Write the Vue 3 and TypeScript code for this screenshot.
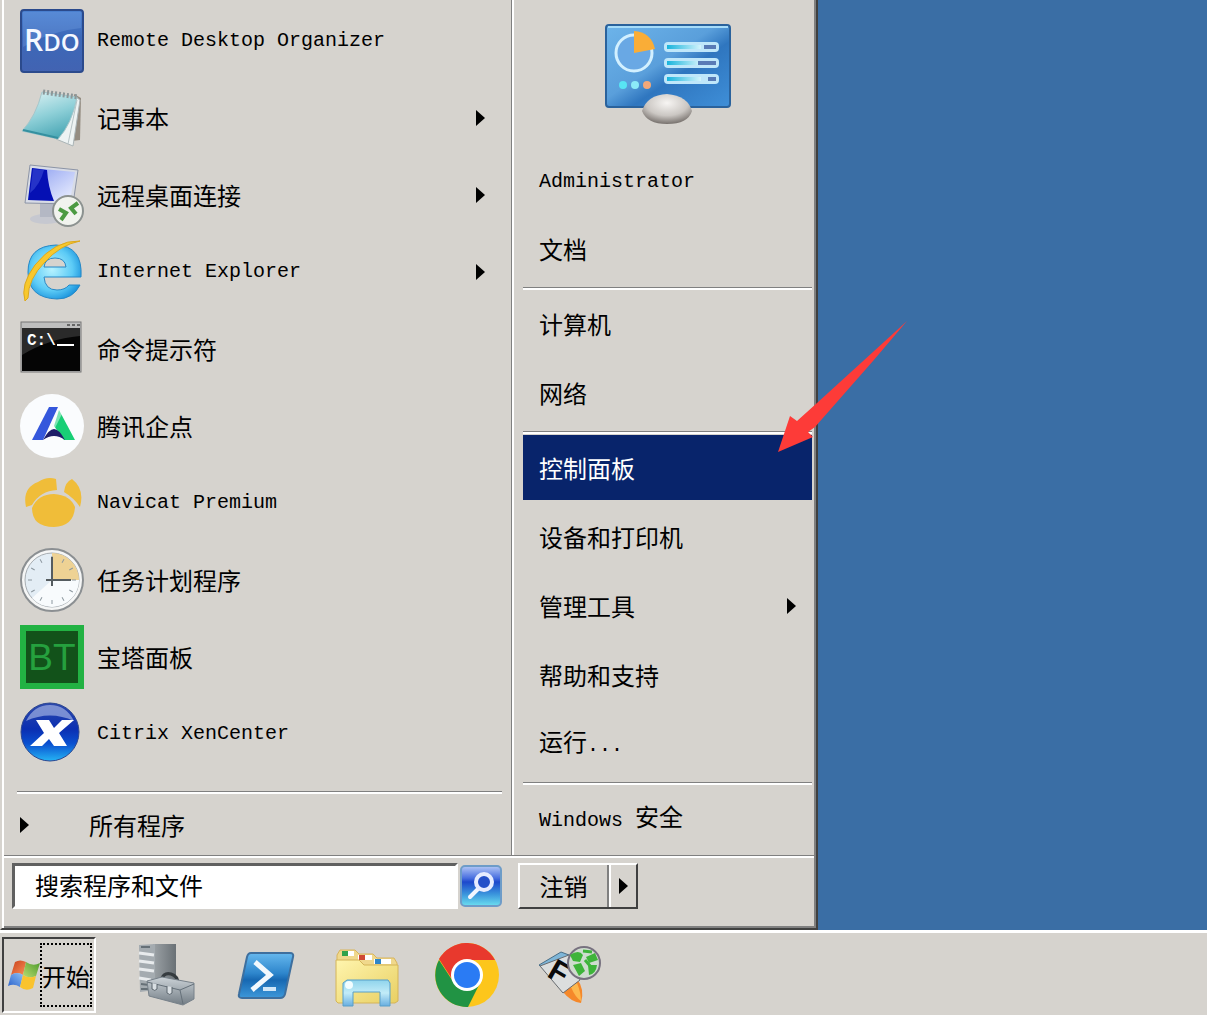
<script setup lang="ts">
import { ref } from 'vue'

interface Program {
  icon: string
  label: string
  latin?: boolean
  submenu?: boolean
}

interface Place {
  label?: string
  latin?: string
  latinAfter?: boolean
  submenu?: boolean
  selected?: boolean
}

const programs: Program[] = [
  { icon: 'rdo', label: 'Remote Desktop Organizer', latin: true },
  { icon: 'notepad', label: '记事本', submenu: true },
  { icon: 'remote', label: '远程桌面连接', submenu: true },
  { icon: 'ie', label: 'Internet Explorer', latin: true, submenu: true },
  { icon: 'cmd', label: '命令提示符' },
  { icon: 'qidian', label: '腾讯企点' },
  { icon: 'navicat', label: 'Navicat Premium', latin: true },
  { icon: 'clock', label: '任务计划程序' },
  { icon: 'bt', label: '宝塔面板' },
  { icon: 'xen', label: 'Citrix XenCenter', latin: true },
]

const placeGroups: Place[][] = [
  [{ latin: 'Administrator' }, { label: '文档' }],
  [{ label: '计算机' }, { label: '网络' }],
  [
    { label: '控制面板', selected: true },
    { label: '设备和打印机' },
    { label: '管理工具', submenu: true },
    { label: '帮助和支持' },
    { label: '运行', latin: '...', latinAfter: true },
  ],
  [{ latin: 'Windows ', label: '安全' }],
]

const ticks = Array.from({ length: 12 }, (_, i) => i * 30)
const query = ref('')
</script>

<template>
  <div class="page">
    <main class="desktop">
      <section class="menu" aria-label="开始菜单">
        <div class="panes">
          <nav class="programs">
            <button v-for="p in programs" :key="p.icon" class="program" type="button">
              <svg class="program-icon" viewBox="0 0 64 64" aria-hidden="true">
                <g v-if="p.icon === 'rdo'">
                  <defs>
                    <linearGradient id="rdoFill" x1="0" y1="0" x2="0" y2="1">
                      <stop offset="0" stop-color="#4a80d0" />
                      <stop offset=".45" stop-color="#3c68b8" />
                      <stop offset="1" stop-color="#4263b2" />
                    </linearGradient>
                  </defs>
                  <rect x="1" y="1" width="62" height="62" rx="3" fill="url(#rdoFill)" stroke="#2b4a8c" stroke-width="2" />
                  <path d="M3 3h58v16Q30 22 3 38Z" fill="#7aa6e8" opacity=".3" />
                  <text x="4" y="42" font-family="'Open Sans', sans-serif" font-weight="600" font-size="30" fill="#f4f8ff">R<tspan font-size="24">DO</tspan></text>
                </g>
                <g v-else-if="p.icon === 'notepad'">
                  <defs>
                    <linearGradient id="padFill" x1=".2" y1="0" x2=".6" y2="1">
                      <stop offset="0" stop-color="#d8f0f2" />
                      <stop offset=".5" stop-color="#8fd0d8" />
                      <stop offset="1" stop-color="#48a6b4" />
                    </linearGradient>
                  </defs>
                  <path d="M54 8 61 12 60 54 52 55Z" fill="#958d82" />
                  <path d="M56 11 60 14 53 60 36 53Z" fill="#eef3f3" stroke="#aab4b6" />
                  <path d="M57 14 48 58" stroke="#b8c4c6" fill="none" />
                  <path d="M22 6 57 11Q52 38 38 53L2 45Q16 30 22 6Z" fill="url(#padFill)" stroke="#a6c6ca" />
                  <path d="M3 44 38 52" stroke="#3590a0" stroke-width="2" />
                  <path d="M23 6 58 11" stroke="#8c9698" stroke-width="5" stroke-dasharray="2 2" />
                </g>
                <g v-else-if="p.icon === 'remote'">
                  <defs>
                    <linearGradient id="scrFill" x1="0" y1="0" x2="1" y2="1">
                      <stop offset="0" stop-color="#8a9cf0" />
                      <stop offset="1" stop-color="#eef2ff" />
                    </linearGradient>
                  </defs>
                  <ellipse cx="26" cy="56" rx="16" ry="5" fill="#c6c8d0" />
                  <path d="M20 40h14v14H20Z" fill="#b4b8c4" />
                  <path d="M10 2 58 7 53 41 5 40Z" fill="#d8dce6" stroke="#8c94a6" />
                  <path d="M12 5 55 9 50 38 8 37Z" fill="url(#scrFill)" />
                  <path d="M12 5 27 7Q28 24 34 38L8 37Z" fill="#0510b4" />
                  <path d="M13 6 24 7Q20 22 10 30Z" fill="#3f50d8" opacity=".55" />
                  <circle cx="48" cy="48" r="15" fill="#f1f3ee" stroke="#8c9290" stroke-width="2" />
                  <path d="M39 46 46 50 41 57M58 40 51 45 56 51" fill="none" stroke="#4c9a42" stroke-width="4" />
                </g>
                <g v-else-if="p.icon === 'ie'">
                  <defs>
                    <radialGradient id="ieFill" cx=".45" cy=".45" r=".6">
                      <stop offset="0" stop-color="#b6f2ff" />
                      <stop offset=".65" stop-color="#5ccbf6" />
                      <stop offset="1" stop-color="#1b93dc" />
                    </radialGradient>
                  </defs>
                  <path d="M61 37H24q1 13 13 13 8 0 12-5h11q-7 14-23 14Q8 58 8 32T36 5q27 1 25 32ZM24 27h22q-1-9-11-9T24 27Z" fill="url(#ieFill)" stroke="#2688c6" />
                  <path d="M5 61Q0 45 15 25 35 0 60 1 40 5 25 22 8 39 8 58Z" fill="#f8c82c" stroke="#dda81c" />
                </g>
                <g v-else-if="p.icon === 'cmd'">
                  <rect x="1" y="5" width="60" height="50" fill="#bebebe" stroke="#777" />
                  <rect x="2" y="11" width="58" height="43" fill="#050505" />
                  <path d="M2 11h58v8Q28 22 2 38Z" fill="#484848" opacity=".55" />
                  <path d="M47 8h3M52 8h3M57 8h3" stroke="#666" stroke-width="2" />
                  <text x="7" y="28" font-family="'Liberation Mono', monospace" font-weight="700" font-size="16" fill="#fff">C:\</text>
                  <path d="M37 28h17" stroke="#fff" stroke-width="2" />
                </g>
                <g v-else-if="p.icon === 'qidian'">
                  <circle cx="32" cy="32" r="32" fill="#fafcfe" />
                  <path d="M29 13h9L23 46H12Z" fill="#3457dc" />
                  <path d="M39 16 55 46H44L34 32Z" fill="#18cf76" />
                  <path d="M39 14 42 20 35 34 30 31Z" fill="#fafcfe" opacity=".45" />
                  <path d="M23 46Q29 35 34 35T45 46Q34 38 23 46Z" fill="#1d1d68" />
                </g>
                <g v-else-if="p.icon === 'navicat'">
                  <path d="M6 36Q2 17 18 11 27 5 36 8L37 19Q20 20 12 34ZM52 8Q65 18 60 36 54 27 44 21 45 11 52 8Z" fill="#f0bd39" />
                  <path d="M12 37Q18 23 34 23 50 24 55 36 54 55 34 56 12 56 12 37Z" fill="#f0bd39" />
                </g>
                <g v-else-if="p.icon === 'clock'">
                  <circle cx="32" cy="32" r="31" fill="#f5f6f6" stroke="#8b8f92" stroke-width="2" />
                  <circle cx="32" cy="32" r="27" fill="#e3edf5" stroke="#a7adb2" />
                  <path d="M32 32V5A27 27 0 0 1 59 32Z" fill="#eed294" />
                  <path d="M32 32H59A27 27 0 0 1 12 50Z" fill="#f8fbfd" />
                  <path v-for="t in ticks" :key="t" d="M32 8v4" stroke="#8c979f" :transform="`rotate(${t} 32 32)`" />
                  <path d="M32 9v29M26 32h25" stroke="#555c60" stroke-width="2" />
                </g>
                <g v-else-if="p.icon === 'bt'">
                  <rect width="64" height="64" fill="#22b243" />
                  <rect x="6" y="6" width="52" height="52" fill="#12521a" />
                  <text x="32" y="45" text-anchor="middle" font-family="'Liberation Sans', sans-serif" font-size="37" fill="#25a03e">BT</text>
                </g>
                <g v-else>
                  <defs>
                    <linearGradient id="xenFill" x1="0" y1="0" x2="0" y2="1">
                      <stop offset="0" stop-color="#2d49ac" />
                      <stop offset=".45" stop-color="#0b2fb2" />
                      <stop offset=".7" stop-color="#0a50d0" />
                      <stop offset="1" stop-color="#25b4f4" />
                    </linearGradient>
                  </defs>
                  <circle cx="30" cy="30" r="29" fill="url(#xenFill)" stroke="#2c4690" />
                  <path d="M6 19Q14 3 30 3T54 19Q30 8 6 19Z" fill="#a9b8e6" opacity=".65" />
                  <path d="M16 18H29L34 26 42 18H54L39 31 47 44H34L29 37 22 44H10L24 31Z" fill="#fff" />
                </g>
              </svg>
              <span class="program-label" :class="{ latin: p.latin }">{{ p.label }}</span>
              <svg v-if="p.submenu" class="caret" viewBox="0 0 9 16" aria-hidden="true"><path d="M0 0 9 8 0 16Z" /></svg>
            </button>
            <hr class="rule programs-rule" />
            <button class="all-programs" type="button">
              <svg class="caret" viewBox="0 0 9 16" aria-hidden="true"><path d="M0 0 9 8 0 16Z" /></svg>
              <span>所有程序</span>
            </button>
          </nav>

          <nav class="places">
            <div class="places-picture">
              <svg viewBox="0 0 128 104" width="128" height="104" aria-hidden="true">
                <defs>
                  <linearGradient id="panelFill" x1="0" y1="0" x2="1" y2="1">
                    <stop offset="0" stop-color="#6db4ea" />
                    <stop offset=".45" stop-color="#5a9fdb" />
                    <stop offset=".6" stop-color="#2f76bf" />
                    <stop offset="1" stop-color="#3f8fd8" />
                  </linearGradient>
                  <radialGradient id="mouseFill" cx=".5" cy=".3" r=".7">
                    <stop offset="0" stop-color="#f7f5f3" />
                    <stop offset=".6" stop-color="#cbc7c3" />
                    <stop offset="1" stop-color="#77716d" />
                  </radialGradient>
                  <linearGradient id="barFill">
                    <stop offset="0" stop-color="#18b4dc" />
                    <stop offset="1" stop-color="#d4f4fc" />
                  </linearGradient>
                </defs>
                <rect x="2" y="3" width="124" height="82" rx="3" fill="url(#panelFill)" stroke="#2a629c" stroke-width="2" />
                <path d="M4 5H124" stroke="#a6dcfa" stroke-width="2" />
                <circle cx="30" cy="31" r="18" fill="#69a8e4" stroke="#d2f0ff" stroke-width="3" />
                <path d="M30 31V9Q47 10 51 27Z" fill="#f9ad37" />
                <g v-for="(y, i) in [25, 41, 57]" :key="y">
                  <rect x="60" :y="y - 5" width="55" height="10" rx="4" fill="#bfe7fa" />
                  <rect x="63" :y="y - 2" width="34" height="4" fill="url(#barFill)" />
                  <rect :x="[100, 94, 104][i]" :y="y - 2" :width="[12, 18, 8][i]" height="4" fill="#587bb6" />
                </g>
                <circle cx="19" cy="63" r="4" fill="#58e4f4" />
                <circle cx="31" cy="63" r="4" fill="#8ceaf8" />
                <circle cx="43" cy="63" r="4" fill="#f4a878" />
                <path d="M38 89Q43 73 63 72 84 74 88 89 84 102 63 102 43 102 38 89Z" fill="url(#mouseFill)" />
              </svg>
            </div>
            <template v-for="(group, g) in placeGroups" :key="g">
              <hr v-if="g > 0" class="rule places-rule" />
              <button
                v-for="(p, i) in group"
                :key="i"
                class="place"
                :class="{ selected: p.selected }"
                type="button"
              >
                <span class="place-label"><span v-if="p.latin && !p.latinAfter" class="latin">{{ p.latin }}</span>{{ p.label }}<span v-if="p.latinAfter" class="latin">{{ p.latin }}</span></span>
                <svg v-if="p.submenu" class="caret" viewBox="0 0 9 16" aria-hidden="true"><path d="M0 0 9 8 0 16Z" /></svg>
              </button>
            </template>
          </nav>
        </div>

        <footer class="menu-footer">
          <form class="search" @submit.prevent>
            <input v-model="query" class="search-box" type="text" placeholder="搜索程序和文件" aria-label="搜索程序和文件" />
            <button class="search-button" type="submit" aria-label="搜索">
              <svg viewBox="0 0 42 42" width="42" height="42" aria-hidden="true">
                <defs>
                  <linearGradient id="searchFill" x1="0" y1="0" x2="0" y2="1">
                    <stop offset="0" stop-color="#b4c8f6" />
                    <stop offset=".3" stop-color="#4a70e0" />
                    <stop offset=".4" stop-color="#1c48cc" />
                    <stop offset=".7" stop-color="#3a94dc" />
                    <stop offset="1" stop-color="#6ce0f0" />
                  </linearGradient>
                </defs>
                <rect x="1" y="1" width="40" height="40" rx="4" fill="url(#searchFill)" stroke="#6e9cc8" stroke-width="2" />
                <path d="M19 23 10 32" stroke="#f2f6ff" stroke-width="4" stroke-linecap="round" />
                <circle cx="24" cy="17" r="8" fill="#2450c8" stroke="#e6ecff" stroke-width="4" />
              </svg>
            </button>
          </form>
          <div class="logoff">
            <button class="logoff-main" type="button">注销</button>
            <button class="logoff-more" type="button" aria-label="更多选项">
              <svg class="caret" viewBox="0 0 9 16" aria-hidden="true"><path d="M0 0 9 8 0 16Z" /></svg>
            </button>
          </div>
        </footer>
        <svg class="pointer" viewBox="0 0 130 132" width="130" height="132" aria-hidden="true">
          <path d="M0 132 12 96 19 101 39 83 129 1 95 41 37 107 30 112 35 117Z" fill="#fd3b38" />
        </svg>
      </section>
    </main>

    <footer class="taskbar">
      <button class="start" type="button">
        <svg viewBox="0 0 32 32" width="32" height="32" aria-hidden="true">
          <defs>
            <linearGradient id="flagRed" x1="0" y1="0" x2="1" y2="1">
              <stop offset="0" stop-color="#c9401c" />
              <stop offset="1" stop-color="#f89058" />
            </linearGradient>
            <linearGradient id="flagGreen" x1="1" y1="0" x2="0" y2="1">
              <stop offset="0" stop-color="#4c9a2c" />
              <stop offset="1" stop-color="#b8dc70" />
            </linearGradient>
            <linearGradient id="flagBlue" x1="0" y1="1" x2="1" y2="0">
              <stop offset="0" stop-color="#2c62cc" />
              <stop offset="1" stop-color="#8cc0f4" />
            </linearGradient>
          </defs>
          <path d="M7 3Q12 0 18 3L15 16Q9 12 3 16Z" fill="url(#flagRed)" />
          <path d="M18 3Q25 8 32 4L28 17Q21 20 15 16Z" fill="url(#flagGreen)" />
          <path d="M3 16Q9 12 15 16L12 28Q6 24 0 27Z" fill="url(#flagBlue)" />
          <path d="M15 16Q21 20 28 17L25 29Q18 33 12 28Z" fill="#fac32e" />
        </svg>
        <span class="start-label">开始</span>
      </button>
      <div class="quick">
        <button type="button" aria-label="服务器管理器">
          <svg viewBox="0 0 64 64" width="64" height="64" aria-hidden="true">
            <defs>
              <linearGradient id="towerFill">
                <stop offset="0" stop-color="#9ca2a6" />
                <stop offset="1" stop-color="#6a7176" />
              </linearGradient>
              <linearGradient id="boxFill" x1="0" y1="0" x2="0" y2="1">
                <stop offset="0" stop-color="#cbd2d7" />
                <stop offset="1" stop-color="#737d85" />
              </linearGradient>
            </defs>
            <path d="M18 1h23v40H18Z" fill="url(#towerFill)" />
            <path d="M4 2 20 1V47L5 49Z" fill="#a4abb0" />
            <path d="M4 10 19 12M4 18 19 20M4 26 19 28M4 35 16 37" stroke="#e8ebed" stroke-width="3" />
            <path d="M6 4h9M6 41 14 42M6 46 13 46" stroke="#667077" stroke-width="2" />
            <path d="M26 37Q29 29 36 31T43 41" fill="none" stroke="#353b3f" stroke-width="3" />
            <path d="M12 38 27 34 59 40V56L48 62 14 53Z" fill="url(#boxFill)" stroke="#77818a" />
            <path d="M12 39 45 47 59 41M45 47 48 61" fill="none" stroke="#657079" />
            <path d="M17 40v6q3 3 5 0v-5M32 43v7q3 3 5 0v-6" fill="#d9dfe3" stroke="#5a646c" />
          </svg>
        </button>
        <button type="button" aria-label="PowerShell">
          <svg viewBox="0 0 64 64" width="64" height="64" aria-hidden="true">
            <defs>
              <linearGradient id="psFill" x1="0" y1="0" x2="0" y2="1">
                <stop offset="0" stop-color="#66b8ee" />
                <stop offset=".45" stop-color="#2e86cc" />
                <stop offset=".6" stop-color="#1768b2" />
                <stop offset="1" stop-color="#3d98da" />
              </linearGradient>
            </defs>
            <path d="M16 10H55Q59 10 58 14L50 51Q49 55 45 55H7Q3 55 4 51L12 14Q13 10 16 10Z" fill="url(#psFill)" stroke="#3e6f9e" stroke-width="2" />
            <path d="M20 19 35 32 17 47" fill="none" stroke="#f2f8fd" stroke-width="5" />
            <path d="M28 46H41" stroke="#cfe6f8" stroke-width="4" />
          </svg>
        </button>
        <button type="button" aria-label="文件资源管理器">
          <svg viewBox="0 0 64 64" width="64" height="64" aria-hidden="true">
            <defs>
              <linearGradient id="folderFill" x1="0" y1="0" x2="1" y2="1">
                <stop offset="0" stop-color="#fff5ae" />
                <stop offset="1" stop-color="#e8cf62" />
              </linearGradient>
              <linearGradient id="standFill" x1="0" y1="0" x2="0" y2="1">
                <stop offset="0" stop-color="#8fd4ec" />
                <stop offset=".5" stop-color="#c2ecf8" />
                <stop offset="1" stop-color="#68aee0" />
              </linearGradient>
            </defs>
            <path d="M2 12 5 7H20L24 11H38L42 15 59 15 62 20V40H2Z" fill="#f0d88c" stroke="#d8b45c" />
            <path d="M7 8h12v5H7ZM23 12h14v5H23ZM39 16h17v5H39Z" fill="#fff" />
            <path d="M7 8h6v5H7Z" fill="#30a24b" />
            <path d="M24 12h6v5H24Z" fill="#cf4a36" />
            <path d="M40 16h6v5H40Z" fill="#2f86c8" />
            <path d="M1 17H24L29 22H63V58L60 60H3L1 58Z" fill="url(#folderFill)" stroke="#d4b458" />
            <path d="M8 40 12 37H53L55 40V63H45V49H18V63H8Z" fill="url(#standFill)" stroke="#599fc8" />
            <circle cx="14" cy="42" r="4" fill="#f2fdff" />
          </svg>
        </button>
        <button type="button" aria-label="Google Chrome">
          <svg viewBox="0 0 64 64" width="64" height="64" aria-hidden="true">
            <circle cx="32" cy="32" r="32" fill="#fdc61b" />
            <path d="M32 32 45 40 33 64A32 32 0 0 1 4 17L19 40Z" fill="#219344" />
            <path d="M4 16A32 32 0 0 1 60 17H32Q18 19 17 36Z" fill="#e8392d" />
            <circle cx="32" cy="32" r="16" fill="#fff" />
            <circle cx="32" cy="32" r="13" fill="#2a7bf4" />
          </svg>
        </button>
        <button type="button" aria-label="FlashFXP">
          <svg viewBox="0 0 68 64" width="68" height="64" aria-hidden="true">
            <path d="M28 49 42 36Q50 46 46 60 36 59 28 49Z" fill="#f5882a" />
            <path d="M36 44 42 40Q46 50 46 58 40 54 36 44Z" fill="#fdb84e" />
            <path d="M4 22 26 9 34 12 9 27Z" fill="#7fb6d8" stroke="#4a6e86" />
            <path d="M5 23 34 12 45 37 28 50Z" fill="#dcdede" stroke="#686c70" />
            <text x="24" y="39" text-anchor="middle" font-family="'Liberation Sans', sans-serif" font-weight="700" font-size="30" fill="#0a0a0a" transform="rotate(30 24 29)">F</text>
            <circle cx="49" cy="20" r="16" fill="#cfdccf" stroke="#77717f" stroke-width="2" />
            <path d="M35 12Q44 6 48 12L45 19 38 18ZM38 22 46 20 50 28 44 33ZM51 14 60 10 63 17 54 20ZM53 22 62 22Q61 31 54 32Z" fill="#3eb43a" />
            <path d="M48 8 57 9M50 17 56 24" stroke="#3eb43a" stroke-width="3" />
          </svg>
        </button>
      </div>
    </footer>
  </div>
</template>

<style>
body {
  margin: 0;
  background: #fff;
}
</style>

<style scoped>
.page {
  box-sizing: border-box;
  display: flex;
  flex-direction: column;
  min-height: 100vh;
  padding: 0 6px 6px 0;
  font-family: 'Noto Sans CJK SC', sans-serif;
  font-size: 24px;
  line-height: 32px;
  color: #000;
}

button,
input {
  margin: 0;
  padding: 0;
  border: 0;
  background: none;
  color: inherit;
  font: inherit;
  text-align: left;
}

svg {
  display: block;
  flex: none;
}

.latin {
  font-family: 'Liberation Mono', monospace;
  font-size: 20px;
  white-space: pre;
}

.desktop {
  flex: 1;
  display: flex;
  align-items: flex-end;
  background: #3a6ea5;
}

.menu {
  position: relative;
  box-sizing: border-box;
  width: 818px;
  max-width: 100%;
  background: #d6d3ce;
  border-left: 2px solid #d6d3ce;
  border-right: 2px solid #404040;
  border-bottom: 2px solid #404040;
  box-shadow: inset 2px 0 #fff, inset -2px -2px #808080;
}

.panes {
  display: flex;
}

.programs {
  flex: 1;
  padding: 2px 9px 0 15px;
  border-right: 1px solid #808080;
}

.program {
  display: flex;
  align-items: center;
  width: 100%;
  height: 77px;
  padding: 0 17px 0 3px;
}

.program-icon {
  width: 64px;
  height: 64px;
}

.program-label {
  flex: 1;
  padding-left: 13px;
}

.caret {
  width: 9px;
  height: 16px;
  fill: #000;
}

.rule {
  height: 0;
  margin: 0;
  border: 0;
  border-top: 1px solid #808080;
  border-bottom: 2px solid #fff;
}

.programs-rule {
  margin-top: 19px;
}

.all-programs {
  display: flex;
  align-items: center;
  gap: 60px;
  width: 100%;
  height: 61px;
  padding-left: 3px;
}

.places {
  flex: none;
  display: flex;
  flex-direction: column;
  box-sizing: border-box;
  width: 304px;
  padding: 0 4px 0 9px;
  border-left: 2px solid #fff;
}

.places-picture {
  display: flex;
  justify-content: center;
  padding: 22px 0 21px;
}

.places-rule {
  margin: 2px 0 1px;
}

.place {
  display: flex;
  align-items: center;
  justify-content: space-between;
  height: 65px;
  margin-bottom: 4px;
  padding: 0 16px;
}

.place.selected {
  background: #08246b;
  color: #fff;
}

.menu-footer {
  display: flex;
  align-items: flex-start;
  gap: 16px;
  padding: 7px 0 19px 8px;
  margin: 0 2px;
  border-top: 1px solid #808080;
  box-shadow: inset 0 2px #fff;
}

.search {
  display: flex;
  align-items: center;
  gap: 2px;
  flex: none;
  width: 490px;
}

.search-box {
  box-sizing: border-box;
  flex: 1;
  min-width: 0;
  height: 46px;
  padding: 0 20px 4px;
  border: 3px solid #fff;
  border-top-color: #606060;
  border-left-color: #606060;
  background: #fff;
}

.search-box::placeholder {
  color: #000;
  opacity: 1;
}

.logoff {
  display: flex;
  border: 2px solid #404040;
  border-top-color: #fff;
  border-left-color: #fff;
}

.logoff button {
  height: 42px;
  display: flex;
  align-items: center;
  justify-content: center;
}

.logoff-main {
  width: 89px;
  border-right: 2px solid #808080;
}

.logoff-more {
  width: 27px;
  border-left: 2px solid #fff;
}

.pointer {
  position: absolute;
  left: 776px;
  top: 320px;
}

.taskbar {
  display: flex;
  align-items: center;
  gap: 39px;
  padding: 4px 2px 2px;
  border-top: 3px solid #fff;
  background: #d6d3ce;
}

.start {
  box-sizing: border-box;
  display: flex;
  align-items: center;
  width: 94px;
  height: 76px;
  padding-left: 4px;
  border: 2px solid #fff;
  border-top-color: #404040;
  border-left-color: #404040;
}

.start-label {
  flex: none;
  box-sizing: border-box;
  width: 52px;
  height: 64px;
  border: 2px dotted #000;
  line-height: 62px;
}

.quick {
  display: flex;
  gap: 36px;
}

.quick button {
  width: 64px;
  height: 64px;
}
</style>
